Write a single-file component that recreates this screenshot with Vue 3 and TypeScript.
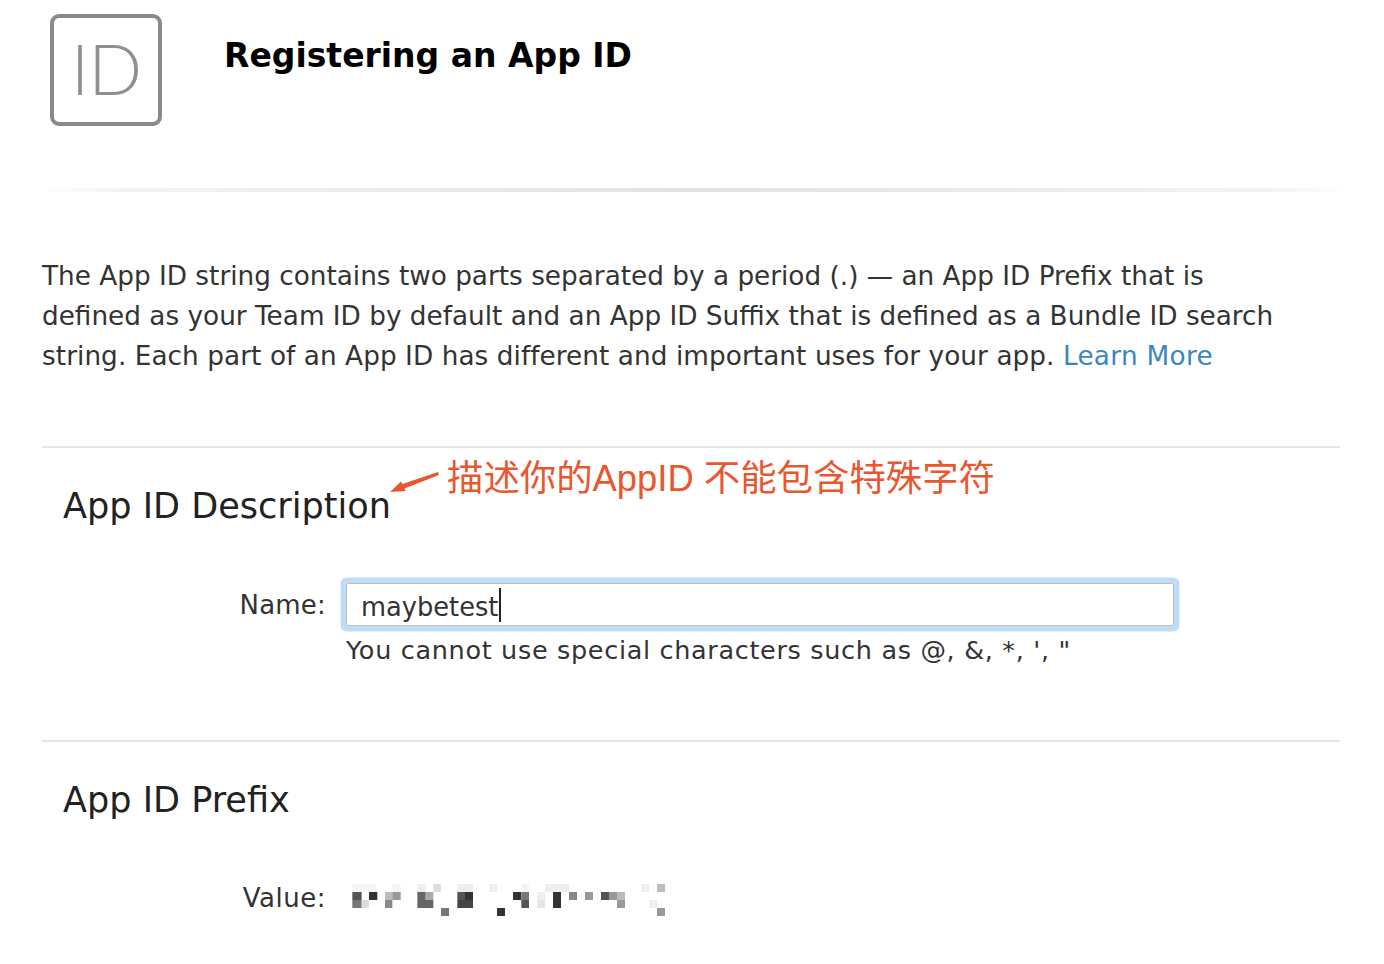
<script setup lang="ts">
interface Cell { x: number; y: number; w: number; c: string }
const rows: [number, [number, number, string][]][] = [
  [0, [[40, 112, '#f5f5f5'], [160, 185, '#f5f5f5'], [235, 260, '#eee'], [283, 306, '#ddd'], [355, 402, '#eee'], [450, 474, '#eee'], [547, 570, '#f5f5f5'], [618, 690, '#eee'], [906, 930, '#eee'], [954, 978, '#bbb']]],
  [1, [[40, 68, '#555'], [90, 115, '#333'], [138, 160, '#bbb'], [160, 185, '#999'], [235, 260, '#666'], [260, 283, '#aaa'], [355, 378, '#555'], [378, 402, '#333'], [522, 547, '#333'], [547, 570, '#777'], [595, 618, '#eee'], [642, 666, '#333'], [690, 714, '#888'], [738, 762, '#999'], [786, 810, '#555'], [810, 834, '#999'], [834, 858, '#bbb']]],
  [2, [[40, 68, '#777'], [68, 90, '#ddd'], [138, 160, '#888'], [235, 283, '#666'], [355, 402, '#444'], [547, 570, '#555'], [595, 618, '#e5e5e5'], [642, 666, '#333'], [834, 858, '#999'], [930, 954, '#eee']]],
  [3, [[306, 330, '#777'], [474, 498, '#333'], [954, 978, '#999']]],
]
const cells: Cell[] = rows.flatMap(([r, list]) =>
  list.map(([a, b, c]) => ({ x: a / 3, y: r * 8, w: (b - a) / 3, c })),
)
</script>

<template>
  <main class="page">
    <header class="head">
      <div class="badge"><span>ID</span></div>
      <h1>Registering an App ID</h1>
    </header>
    <div class="rule"></div>
    <p class="intro">
      The App ID string contains two parts separated by a period (.) — an App ID Prefix that is<br />
      defined as your Team ID by default and an App ID Suffix that is defined as a Bundle ID search<br />
      <span class="last">string. Each part of an App ID has different and important uses for your app.</span> <a class="link">Learn More</a>
    </p>
    <section class="block first">
      <h2>App ID Description</h2>
      <div class="note">
        <svg class="arrow" width="52" height="24" viewBox="0 0 52 24">
          <path d="M1 22 L12 11.500 L13.500 14 L49 2 L50 5 L15.500 18.500 L16.500 21 Z" fill="#e8572f" />
        </svg>
        <span>描述你的AppID 不能包含特殊字符</span>
      </div>
      <div class="row">
        <label class="lab">Name:</label>
        <div class="field"><span class="typed">maybetest</span><i class="caret"></i></div>
      </div>
      <div class="hint">You cannot use special characters such as @, &amp;, *, ', "</div>
    </section>
    <section class="block second">
      <h2>App ID Prefix</h2>
      <div class="row value">
        <label class="lab">Value:</label>
        <svg class="mosaic" width="330" height="32" viewBox="0 0 330 32">
          <rect v-for="(c, i) in cells" :key="i" :x="c.x" :y="c.y" :width="c.w" height="8" :fill="c.c" />
        </svg>
      </div>
    </section>
  </main>
</template>

<style>
html, body { background: #fff; }
</style>

<style scoped>
.page {
  width: 1384px;
  height: 964px;
  overflow: hidden;
  box-sizing: border-box;
  padding: 14px 44px 0 42px;
  font-family: "DejaVu Sans", "Noto Sans", sans-serif;
  color: #333;
  background: #fff;
}
.head { display: flex; height: 174px; margin-left: 8px; }
.badge {
  width: 112px;
  height: 112px;
  box-sizing: border-box;
  border: 4px solid #8a8a8a;
  border-radius: 9px;
  display: flex;
  align-items: center;
  justify-content: center;
  font-family: Lato, sans-serif;
  font-weight: 300;
  font-size: 71px;
  letter-spacing: -1px;
  color: #8f8f8f;
}
.badge span { margin-top: -5px; }
h1 {
  margin: 21px 0 0 62px;
  font-size: 33px;
  line-height: 42px;
  font-weight: 700;
  color: #000;
}
.rule {
  height: 4px;
  margin: 0 -10px 0 -2px;
  background: linear-gradient(90deg, #fff 0%, #f3f3f3 6%, #e2e2e2 50%, #f3f3f3 94%, #fff 100%);
}
.intro {
  margin: 64px 0 0;
  font-size: 26.3px;
  line-height: 40px;
  height: 190px;
}
.last { letter-spacing: 0.065px; }
.link { color: #3a87c0; letter-spacing: 0.3px; }
.block { position: relative; border-top: 2px solid #e6e6e6; }
.first { height: 292px; }
h2 {
  margin: 0;
  padding: 37px 0 0 21px;
  font-size: 35.1px;
  line-height: 42px;
  font-weight: 400;
  color: #222;
}
.note {
  position: absolute;
  left: 347px;
  top: 9px;
  display: flex;
  align-items: center;
  gap: 6px;
  font-family: "Liberation Sans", "Noto Sans CJK SC", sans-serif;
  font-size: 36.4px;
  line-height: 44px;
  color: #e8572f;
}
.arrow { margin-top: 6px; }
.row { display: flex; align-items: center; margin-top: 56px; }
.lab { width: 284px; text-align: right; font-size: 26px; line-height: 40px; letter-spacing: 0.2px; }
.value .lab { letter-spacing: 0.5px; }
.field {
  margin-left: 20px;
  width: 828px;
  height: 43px;
  box-sizing: border-box;
  border: 1px solid #bcbcbc;
  box-shadow: 0 0 0 5.5px #bfdcf9;
  border-radius: 2px;
  padding-left: 14px;
  display: flex;
  align-items: center;
  font-size: 25.7px;
}
.typed { position: relative; top: 2px; }
.caret { width: 1.5px; height: 34px; background: #222; margin-left: 1px; }
.hint { margin: 4px 0 0 304px; font-size: 25.5px; line-height: 40px; letter-spacing: 0.67px; }
.value { margin-top: 57px; }
.mosaic { margin-left: 13px; margin-top: 4px; }
</style>
